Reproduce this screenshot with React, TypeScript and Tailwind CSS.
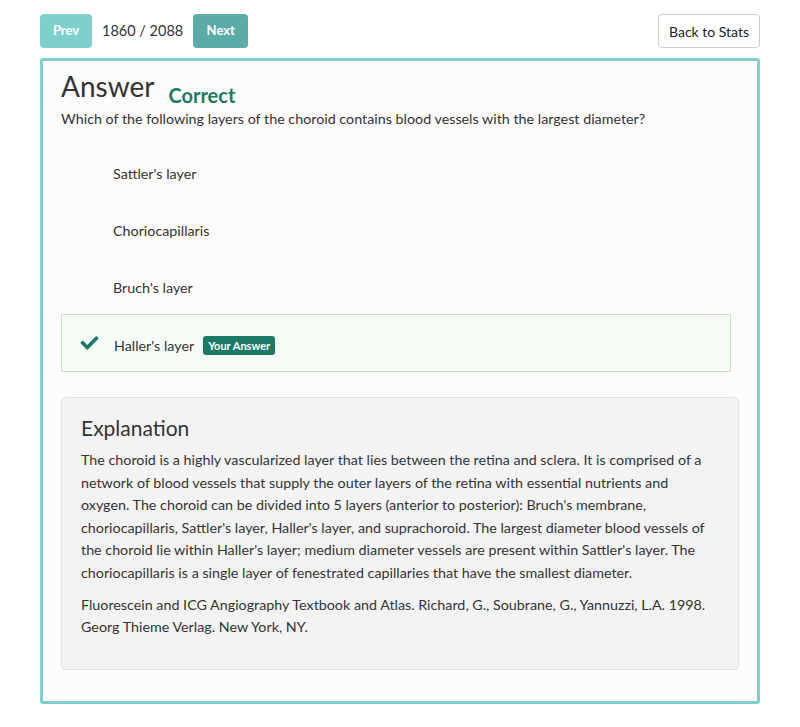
import React from "react";
import { FaCheck } from "react-icons/fa";

const font = { fontFamily: "Lato, 'Open Sans', sans-serif" };

function Option({ label }: { label: string }) {
  return (
    <div className="flex h-[57px] items-center border border-transparent pl-[17px]">
      <FaCheck className="h-[18px] w-[20px] text-[#fbfaf8]" />
      <span className="ml-[14px] pt-[4px] text-[14.3px] text-[#333]">{label}</span>
    </div>
  );
}

export default function App() {
  return (
    <div className="min-h-[727px] bg-white px-[40px] pt-[14px]" style={font}>
      <div className="flex items-center justify-between">
        <div className="flex items-center">
          <button className="h-[34px] w-[52px] rounded-[4px] bg-[#7fcfcc] text-[13px] font-bold text-white">
            Prev
          </button>
          <span className="ml-[10px] text-[14.5px] text-[#333]">1860 / 2088</span>
          <button className="ml-[10px] h-[34px] w-[55px] rounded-[4px] bg-[#5aaca7] text-[13px] font-bold text-white">
            Next
          </button>
        </div>
        <button className="h-[34px] w-[102px] rounded-[4px] border border-[#cccccc] bg-white text-[14px] text-[#222]">
          Back to Stats
        </button>
      </div>

      <div className="mt-[10px] rounded-[3px] border-[3px] border-[#7fcfcc] bg-[#fdfcfa] px-[18px] pb-[31px] pt-[7px]">
        <div className="flex items-end">
          <h1 className="text-[28px] leading-[36px] text-[#333]">Answer</h1>
          <span className="-mb-[4px] ml-[14px] text-[20px] font-bold leading-[26px] text-[#1b7a64]">Correct</span>
        </div>
        <p className="mt-[4px] text-[14.3px] leading-[22px] text-[#333]">
          Which of the following layers of the choroid contains blood vessels with the largest diameter?
        </p>

        <div className="mt-[13px] flex flex-col">
          <Option label="Sattler's layer" />
          <Option label="Choriocapillaris" />
          <Option label="Bruch's layer" />
          <div className="mr-[8px] flex h-[58px] items-center border border-[#c6e6c0] bg-[#f6fbf5] pl-[17px]">
            <FaCheck className="h-[18px] w-[21px] text-[#1b7a66]" />
            <span className="ml-[14px] pt-[5px] text-[14.3px] text-[#333]">Haller's layer</span>
            <span className="ml-[9px] mt-[5px] rounded-[3px] bg-[#1b7a66] px-[5px] py-[2px] text-[11px] font-bold leading-[15px] text-white">
              Your Answer
            </span>
          </div>
        </div>

        <div className="mt-[25px] rounded-[4px] border border-[#e2e2e2] bg-[#f3f3f3] px-[19px] pb-[30px] pt-[15px]">
          <h2 className="text-[21px] leading-[30px] text-[#333]">Explanation</h2>
          <p className="mt-[6px] whitespace-nowrap text-[14.3px] leading-[22.6px] text-[#333]">
            The choroid is a highly vascularized layer that lies between the retina and sclera. It is comprised of a
            <br />
            network of blood vessels that supply the outer layers of the retina with essential nutrients and
            <br />
            oxygen. The choroid can be divided into 5 layers (anterior to posterior): Bruch's membrane,
            <br />
            choriocapillaris, Sattler's layer, Haller's layer, and suprachoroid. The largest diameter blood vessels of
            <br />
            the choroid lie within Haller's layer; medium diameter vessels are present within Sattler's layer. The
            <br />
            choriocapillaris is a single layer of fenestrated capillaries that have the smallest diameter.
          </p>
          <p className="mt-[9px] whitespace-nowrap text-[14.3px] leading-[22.6px] text-[#333]">
            Fluorescein and ICG Angiography Textbook and Atlas. Richard, G., Soubrane, G., Yannuzzi, L.A. 1998.
            <br />
            Georg Thieme Verlag. New York, NY.
          </p>
        </div>
      </div>
    </div>
  );
}
